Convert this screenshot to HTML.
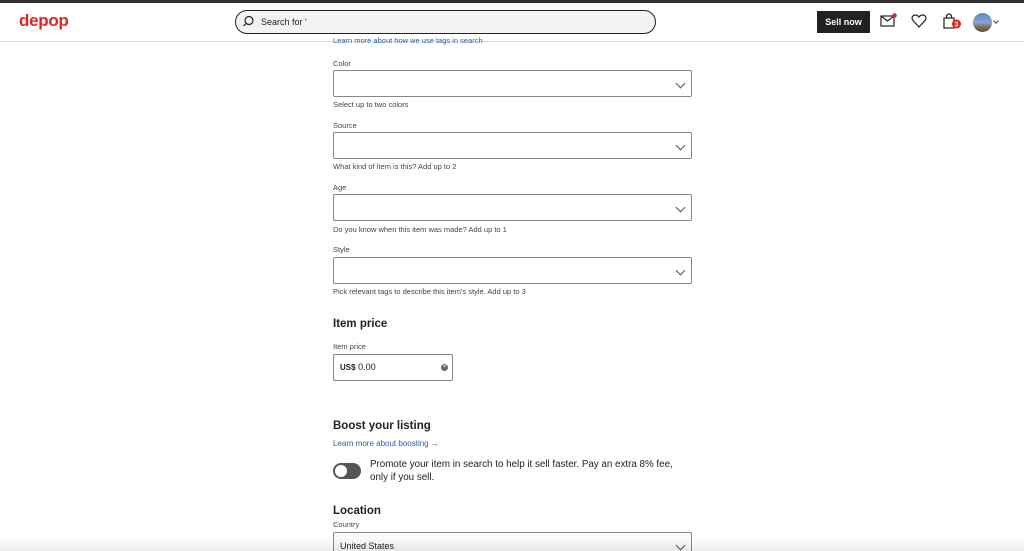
<!DOCTYPE html>
<html><head><meta charset="utf-8"><style>
*{box-sizing:border-box;margin:0;padding:0}
html,body{width:1024px;height:551px;overflow:hidden}
body{background:#fff;font-family:"Liberation Sans",sans-serif;color:#222;position:relative}
.abs{position:absolute}
.topbar{left:0;top:0;width:1024px;height:3px;background:#333}
.hdr{left:0;top:3px;width:1024px;height:39px;border-bottom:1px solid #ddd;background:#fff}
.logo{left:19px;top:11px;color:#e0261f;font-weight:bold;font-size:17px;letter-spacing:-0.3px}
.search{left:235px;top:10px;width:421px;height:24px;border:1.5px solid #222;border-radius:12px;background:#f3f3f3}
.search span{position:absolute;left:25px;top:6px;font-size:9px;color:#222}
.sell{left:817px;top:11px;width:53px;height:22px;background:#222;color:#fff;font-size:9px;font-weight:bold;text-align:center;line-height:22px}
.lbl{font-size:7.5px;color:#444;left:333px}
.box{left:333px;width:359px;height:27px;border:1px solid #888;border-radius:2px}
.chev{position:absolute;right:7px;top:9px;width:7px;height:7px;border-right:1px solid #555;border-bottom:1px solid #555;transform:rotate(45deg)}
.h{left:333px;font-weight:bold;font-size:11.5px;color:#222}
a{color:#2a5db0;text-decoration:none}
</style></head><body>
<div class="abs topbar"></div>
<div class="abs hdr"></div>
<div class="abs logo">depop</div>
<div class="abs search"><svg class="abs" style="left:6px;top:4px" width="13" height="13" viewBox="0 0 13 13"><circle cx="7" cy="5.5" r="4" fill="none" stroke="#222" stroke-width="1.2"/><path d="M4 8.5 1.5 11" stroke="#222" stroke-width="1.2"/></svg><span>Search for '</span></div>
<div class="abs sell">Sell now</div>
<svg class="abs" style="left:879px;top:12px" width="20" height="18" viewBox="0 0 20 18"><rect x="2" y="4" width="13" height="10" fill="none" stroke="#222" stroke-width="1.2"/><path d="M2 4l6.5 5 6.5-5" fill="none" stroke="#222" stroke-width="1.2"/><circle cx="15.5" cy="3.5" r="2.3" fill="#e0261f"/></svg>
<svg class="abs" style="left:911px;top:14px" width="16" height="14" viewBox="0 0 16 14"><path d="M8 13 2 6.5C0 4 1.5 1 4.5 1 6 1 7.3 2 8 3 8.7 2 10 1 11.5 1 14.5 1 16 4 14 6.5Z" fill="none" stroke="#222" stroke-width="1.2"/></svg>
<svg class="abs" style="left:942px;top:13px" width="22" height="17" viewBox="0 0 22 17"><rect x="2" y="5" width="10" height="10" fill="none" stroke="#222" stroke-width="1.2"/><path d="M4.5 5V3.5a2.5 2.5 0 0 1 5 0V5" fill="none" stroke="#222" stroke-width="1.2"/><circle cx="14.5" cy="11" r="4.5" fill="#e0261f"/><text x="14.5" y="13.5" font-size="7" font-weight="bold" fill="#fff" text-anchor="middle" font-family="Liberation Sans">3</text></svg>
<div class="abs" style="left:973px;top:13px;width:19px;height:19px;border-radius:50%;background:linear-gradient(#5a82c8 0%,#8aa6d6 50%,#7a6a55 75%,#5a4a3a 100%)"></div>
<div class="abs" style="left:994px;top:19px;width:4px;height:4px;border-right:1px solid #444;border-bottom:1px solid #444;transform:rotate(45deg)"></div>

<div class="abs" style="left:333px;top:37px;font-size:7.5px;color:#2a5db0;height:9px;overflow:hidden;line-height:7px">Learn more about how we use tags in search</div>

<div class="abs lbl" style="top:59px">Color</div>
<div class="abs box" style="top:70px"><div class="chev"></div></div>
<div class="abs lbl" style="top:100px">Select up to two colors</div>
<div class="abs lbl" style="top:121px">Source</div>
<div class="abs box" style="top:132px"><div class="chev"></div></div>
<div class="abs lbl" style="top:162px">What kind of item is this? Add up to 2</div>
<div class="abs lbl" style="top:183px">Age</div>
<div class="abs box" style="top:194px"><div class="chev"></div></div>
<div class="abs lbl" style="top:225px">Do you know when this item was made? Add up to 1</div>
<div class="abs lbl" style="top:245px">Style</div>
<div class="abs box" style="top:257px"><div class="chev"></div></div>
<div class="abs lbl" style="top:287px">Pick relevant tags to describe this item's style. Add up to 3</div>

<div class="abs h" style="top:318px">Item price</div>
<div class="abs lbl" style="top:342px">Item price</div>
<div class="abs" style="left:333px;top:354px;width:120px;height:27px;border:1px solid #888;border-radius:2px;font-size:9px;line-height:25px;padding-left:6px"><b style="font-size:8px">US$</b> 0.00<span style="position:absolute;right:4px;top:9px;width:7px;height:7px;border-radius:50%;background:#666;color:#fff;font-size:6px;line-height:7px;text-align:center">×</span></div>

<div class="abs h" style="top:420px">Boost your listing</div>
<div class="abs" style="left:333px;top:439px;font-size:8px"><a>Learn more about boosting →</a></div>
<div class="abs" style="left:333px;top:463px;width:28px;height:16px;border-radius:8px;background:#555"><div style="position:absolute;left:2px;top:2px;width:12px;height:12px;border-radius:50%;background:#fff"></div></div>
<div class="abs" style="left:370px;top:459px;font-size:9.8px;line-height:12.5px;color:#222;width:330px">Promote your item in search to help it sell faster. Pay an extra 8% fee,<br>only if you sell.</div>

<div class="abs h" style="top:505px">Location</div>
<div class="abs lbl" style="top:520px">Country</div>
<div class="abs box" style="top:532px;height:30px;background:#fafafa;font-size:9px;padding:8px 6px">United States<div class="chev" style="top:9px"></div></div>
<div class="abs" style="left:0;top:538px;width:1024px;height:13px;background:linear-gradient(rgba(0,0,0,0),rgba(0,0,0,0.08))"></div>
</body></html>
